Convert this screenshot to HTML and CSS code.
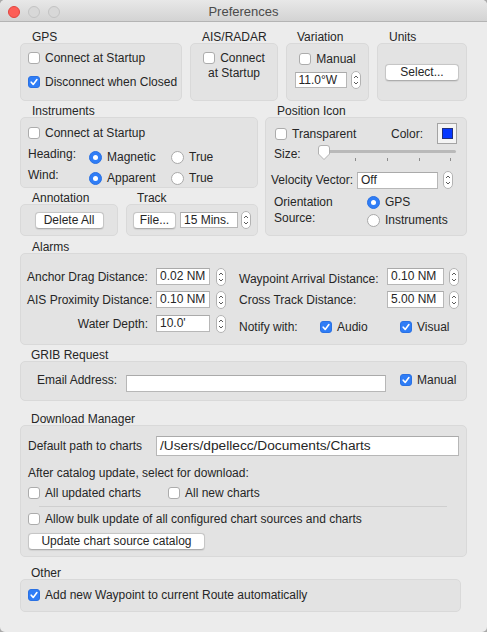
FILE: index.html
```html
<!DOCTYPE html>
<html>
<head>
<meta charset="utf-8">
<title>Preferences</title>
<link rel="stylesheet" href="styles.css">
</head>
<body>
<div class="window">
  <div class="titlebar">
    <div class="lights"><span class="light red"></span><span class="light"></span><span class="light"></span></div>
    <div class="title">Preferences</div>
    <div class="tspacer"></div>
  </div>
  <div class="content">
    <div class="row r1">
      <section class="group w-gps">
        <div class="glabel">GPS</div>
        <div class="box box-gps">
          <label class="check"><span class="cb"></span>Connect at Startup</label>
          <label class="check"><span class="cb on"><svg viewBox="0 0 10 10"><path d="M2.2 5.2 L4.2 7.4 L7.9 2.6"/></svg></span>Disconnect when Closed</label>
        </div>
      </section>
      <section class="group w-ais">
        <div class="glabel">AIS/RADAR</div>
        <div class="box box-ais">
          <span class="cb inline"></span>Connect<br>at Startup
        </div>
      </section>
      <section class="group w-var">
        <div class="glabel gl11">Variation</div>
        <div class="box box-var">
          <label class="check"><span class="cb"></span>Manual</label>
          <div class="spin">
            <div class="field f-var">11.0°W</div>
            <svg class="stepper" width="10" height="18" viewBox="0 0 10 18"><rect x="0.5" y="0.5" width="9" height="17" rx="4.5"/><path d="M3 7 L5 5 L7 7 M3 11 L5 13 L7 11"/></svg>
          </div>
        </div>
      </section>
      <section class="group w-units">
        <div class="glabel">Units</div>
        <div class="box box-units">
          <div class="btn b-select">Select...</div>
        </div>
      </section>
    </div>

    <div class="row r2">
      <div class="col-left">
        <section class="group">
          <div class="glabel">Instruments</div>
          <div class="box box-inst">
            <label class="check inst-row1"><span class="cb"></span>Connect at Startup</label>
            <div class="radio-row rr1">
              <div class="rlabel">Heading:</div>
              <label class="ropt"><span class="radio on"></span>Magnetic</label>
              <label class="ropt"><span class="radio"></span>True</label>
            </div>
            <div class="radio-row">
              <div class="rlabel">Wind:</div>
              <label class="ropt"><span class="radio on"></span>Apparent</label>
              <label class="ropt"><span class="radio"></span>True</label>
            </div>
          </div>
        </section>
        <div class="row r2b">
          <section class="group w-annot">
            <div class="glabel">Annotation</div>
            <div class="box box-annot">
              <div class="btn b-delete">Delete All</div>
            </div>
          </section>
          <section class="group w-track">
            <div class="glabel gl11">Track</div>
            <div class="box box-track">
              <div class="btn b-file">File...</div>
              <div class="field f-track">15 Mins.</div>
              <svg class="stepper st-track" width="10" height="18" viewBox="0 0 10 18"><rect x="0.5" y="0.5" width="9" height="17" rx="4.5"/><path d="M3 7 L5 5 L7 7 M3 11 L5 13 L7 11"/></svg>
            </div>
          </section>
        </div>
      </div>
      <div class="col-right">
        <section class="group">
          <div class="glabel">Position Icon</div>
          <div class="box box-pi">
            <div class="pi-row1">
              <label class="check"><span class="cb"></span>Transparent</label>
              <span class="colorlbl">Color:</span>
              <div class="swatch"><span></span></div>
            </div>
            <div class="pi-row2">
              <span class="sizelbl">Size:</span>
              <svg class="slider" width="140" height="17" viewBox="0 0 140 17">
                <rect class="track" x="2" y="5" width="137" height="3" rx="1.5"/>
                <path class="tick" d="M38.5 13 V16 M70.5 13 V16 M102.5 13 V16 M133.5 13 V16"/>
                <path class="knob" d="M1.5 3 Q1.5 0.5 4 0.5 L10 0.5 Q12.5 0.5 12.5 3 L12.5 9 L7 14.5 L1.5 9 Z"/>
              </svg>
            </div>
            <div class="pi-row3">
              <span class="vlbl">Velocity Vector:</span>
              <div class="field f-vel">Off</div>
              <svg class="stepper st-vel" width="10" height="18" viewBox="0 0 10 18"><rect x="0.5" y="0.5" width="9" height="17" rx="4.5"/><path d="M3 7 L5 5 L7 7 M3 11 L5 13 L7 11"/></svg>
            </div>
            <div class="pi-row4">
              <div class="olbl">Orientation<br>Source:</div>
              <div class="ocol">
                <label class="ropt"><span class="radio on"></span>GPS</label>
                <label class="ropt"><span class="radio"></span>Instruments</label>
              </div>
            </div>
          </div>
        </section>
      </div>
    </div>

    <section class="group g-alarms">
      <div class="glabel">Alarms</div>
      <div class="box box-alarms">
        <div class="alarm-left">
          <div class="arow">
            <span class="albl">Anchor Drag Distance:</span>
            <div class="field f-al">0.02 NM</div>
            <svg class="stepper st-al" width="10" height="18" viewBox="0 0 10 18"><rect x="0.5" y="0.5" width="9" height="17" rx="4.5"/><path d="M3 7 L5 5 L7 7 M3 11 L5 13 L7 11"/></svg>
          </div>
          <div class="arow ar2">
            <span class="albl">AIS Proximity Distance:</span>
            <div class="field f-al">0.10 NM</div>
            <svg class="stepper st-al" width="10" height="18" viewBox="0 0 10 18"><rect x="0.5" y="0.5" width="9" height="17" rx="4.5"/><path d="M3 7 L5 5 L7 7 M3 11 L5 13 L7 11"/></svg>
          </div>
          <div class="arow ar3">
            <span class="albl right">Water Depth:</span>
            <div class="field f-al">10.0'</div>
            <svg class="stepper st-al" width="10" height="18" viewBox="0 0 10 18"><rect x="0.5" y="0.5" width="9" height="17" rx="4.5"/><path d="M3 7 L5 5 L7 7 M3 11 L5 13 L7 11"/></svg>
          </div>
        </div>
        <div class="alarm-right">
          <div class="arow">
            <span class="arlbl lower">Waypoint Arrival Distance:</span>
            <div class="field f-ar">0.10 NM</div>
            <svg class="stepper st-ar" width="10" height="18" viewBox="0 0 10 18"><rect x="0.5" y="0.5" width="9" height="17" rx="4.5"/><path d="M3 7 L5 5 L7 7 M3 11 L5 13 L7 11"/></svg>
          </div>
          <div class="arow ar2">
            <span class="arlbl">Cross Track Distance:</span>
            <div class="field f-ar">5.00 NM</div>
            <svg class="stepper st-ar" width="10" height="18" viewBox="0 0 10 18"><rect x="0.5" y="0.5" width="9" height="17" rx="4.5"/><path d="M3 7 L5 5 L7 7 M3 11 L5 13 L7 11"/></svg>
          </div>
          <div class="notify">
            <span class="nlbl">Notify with:</span>
            <label class="check c-audio"><span class="cb on"><svg viewBox="0 0 10 10"><path d="M2.2 5.2 L4.2 7.4 L7.9 2.6"/></svg></span>Audio</label>
            <label class="check"><span class="cb on"><svg viewBox="0 0 10 10"><path d="M2.2 5.2 L4.2 7.4 L7.9 2.6"/></svg></span>Visual</label>
          </div>
        </div>
      </div>
    </section>

    <section class="group g-grib">
      <div class="glabel gl11">GRIB Request</div>
      <div class="box box-grib">
        <span class="elbl">Email Address:</span>
        <div class="field f-email"></div>
        <label class="check c-manual"><span class="cb on"><svg viewBox="0 0 10 10"><path d="M2.2 5.2 L4.2 7.4 L7.9 2.6"/></svg></span>Manual</label>
      </div>
    </section>

    <section class="group g-dl">
      <div class="glabel gl11">Download Manager</div>
      <div class="box box-dl">
        <div class="drow1">
          <span class="dlbl">Default path to charts</span>
          <div class="field f-path">/Users/dpellecc/Documents/Charts</div>
        </div>
        <div class="drow2">After catalog update, select for download:</div>
        <div class="drow3">
          <label class="check c-upd"><span class="cb"></span>All updated charts</label>
          <label class="check"><span class="cb"></span>All new charts</label>
        </div>
        <div class="sep"></div>
        <label class="check drow4"><span class="cb"></span>Allow bulk update of all configured chart sources and charts</label>
        <div class="btn b-update">Update chart source catalog</div>
      </div>
    </section>

    <section class="group g-other">
      <div class="glabel gl11">Other</div>
      <div class="box box-other">
        <label class="check"><span class="cb on"><svg viewBox="0 0 10 10"><path d="M2.2 5.2 L4.2 7.4 L7.9 2.6"/></svg></span>Add new Waypoint to current Route automatically</label>
      </div>
    </section>
  </div>
</div>
</body>
</html>
```
FILE: styles.css
```css
* { box-sizing: border-box; margin: 0; padding: 0; }
html, body { background: #a9a9a9; }
body {
  font-family: "Liberation Sans", Arial, sans-serif;
  font-size: 12px;
  color: #262626;
  width: 487px;
  height: 632px;
  overflow: hidden;
}
.window {
  width: 487px;
  height: 632px;
  background: #ececec;
  border-radius: 5px;
  overflow: hidden;
}

/* title bar */
.titlebar {
  height: 22px;
  display: flex;
  align-items: center;
  background: linear-gradient(#e8e8e8, #d3d3d3);
  border-bottom: 1px solid #b4b4b4;
}
.lights { width: 62px; display: flex; gap: 8px; padding: 2px 0 0 8px; }
.light {
  width: 12px; height: 12px; border-radius: 50%;
  background: #d8d8d8; border: 1px solid #c3c3c3; flex: none;
}
.light.red { background: #fd5e57; border-color: #e1453f; }
.title {
  flex: 1; text-align: center; font-size: 13px; color: #4b4b4b;
  line-height: 19px; padding-top: 2px;
}
.tspacer { width: 62px; }

/* layout */
.content { padding: 9px 20px 0 20px; }
.row { display: flex; }
.r1 { gap: 8px; }
.glabel { height: 12px; line-height: 12px; padding-left: 12px; white-space: nowrap; }
.glabel.gl11 { padding-left: 11px; }
.box { background: #e3e3e3; border: 1px solid #d9d9d9; border-radius: 5px; }

.w-gps { width: 162px; }
.w-ais { width: 88px; }
.w-var { width: 83px; }
.w-units { width: 90px; }
.r1 .box { height: 58px; }

/* controls */
.check { display: flex; align-items: center; gap: 5px; height: 16px; white-space: nowrap; }
.cb {
  width: 12px; height: 12px; border: 1px solid #acacac; border-radius: 3px;
  background: #fff; flex: none; display: flex; align-items: center; justify-content: center;
}
.cb.on { background: #2f7df6; border-color: #2a71e3; }
.cb svg { width: 10px; height: 10px; }
.cb svg path { fill: none; stroke: #fff; stroke-width: 1.6; stroke-linecap: round; stroke-linejoin: round; }
.cb.inline { display: inline-flex; vertical-align: -2px; margin-right: 5px; }

.radio {
  width: 13px; height: 13px; border-radius: 50%; border: 1px solid #a9a9a9;
  background: #fff; flex: none; display: flex; align-items: center; justify-content: center;
}
.radio.on { background: #2f7df6; border-color: #2a71e3; }
.radio.on::after { content: ""; width: 5px; height: 5px; border-radius: 50%; background: #fff; }

.field {
  background: #fff; border: 1px solid #b7b7b7; border-top-color: #aaaaaa;
  height: 17px; line-height: 15px; padding: 0 3px; white-space: nowrap; overflow: hidden; flex: none;
}
.stepper { flex: none; display: block; }
.stepper rect { fill: #fff; stroke: #b3b3b3; }
.stepper path { fill: none; stroke: #5b5b5b; stroke-width: 1; }

.btn {
  background: #fff; border: 1px solid #c6c6c6; border-bottom-color: #adadad; border-radius: 4px;
  height: 17px; line-height: 15px; text-align: center; white-space: nowrap;
  box-shadow: 0 0.5px 1px rgba(0, 0, 0, 0.08); flex: none;
}

/* row 1 */
.box-gps { display: flex; flex-direction: column; gap: 8px; padding: 6px 0 0 7px; }
.box-ais { padding-top: 7px; text-align: center; line-height: 15px; }
.box-var { display: flex; flex-direction: column; align-items: center; padding-top: 7px; gap: 4px; }
.spin { display: flex; align-items: center; gap: 4px; }
.f-var { width: 52px; height: 16px; line-height: 14px; }
.box-units { display: flex; align-items: center; justify-content: center; }
.b-select { width: 74px; }

/* row 2 */
.r2 { gap: 7px; margin-top: 4px; }
.col-left { width: 238px; }
.col-right { width: 202px; }
.box-inst { height: 71px; padding: 7px 0 0 7px; }
.inst-row1 { margin-bottom: 7px; }
.radio-row { display: flex; height: 18px; align-items: center; }
.rr1 { margin-bottom: 3px; }
.rlabel { width: 61px; align-self: flex-start; line-height: 12px; }
.ropt { display: flex; align-items: center; gap: 5px; width: 82px; white-space: nowrap; }

.r2b { gap: 8px; margin-top: 4px; }
.w-annot { width: 98px; }
.w-track { width: 132px; }
.box-annot { height: 32px; display: flex; align-items: center; justify-content: center; }
.b-delete { width: 69px; }
.box-track { height: 32px; display: flex; align-items: center; padding-left: 6px; }
.b-file { width: 43px; margin-right: 4px; }
.f-track { width: 58px; height: 16px; line-height: 14px; }
.st-track { margin-left: 3px; }

.box-pi { height: 119px; padding: 5px 9px 0 9px; }
.pi-row1 { display: flex; align-items: center; height: 21px; }
.pi-row1 .check { flex: 1; }
.colorlbl { margin-right: 14px; }
.swatch {
  width: 20px; height: 21px; border: 1px solid #a4a4a4; background: #f4f4f4;
  display: flex; align-items: center; justify-content: center;
}
.swatch span { width: 11px; height: 11px; background: #0537ff; border: 1px solid #23307a; }
.pi-row2 { display: flex; align-items: center; height: 17px; margin-top: 1px; }
.sizelbl { width: 43px; margin-left: -1px; }
.slider { display: block; flex: none; }
.slider .track { fill: #b9b9b9; }
.slider .tick { stroke: #8c8c8c; stroke-width: 1; fill: none; }
.slider .knob { fill: #fff; stroke: #a2a2a2; stroke-width: 0.8; }
.pi-row3 { display: flex; align-items: center; height: 18px; margin-top: 9px; }
.vlbl { width: 86px; margin-left: -4px; white-space: nowrap; }
.f-vel { width: 81px; }
.st-vel { margin-left: 5px; }
.pi-row4 { display: flex; margin-top: 5px; }
.olbl { width: 93px; line-height: 16px; margin-left: -1px; }
.ocol { display: flex; flex-direction: column; gap: 2px; }
.ocol .ropt { height: 16px; }

/* alarms */
.g-alarms { margin-top: 5px; }
.box-alarms { height: 92px; padding: 14px 0 0 6px; display: flex; }
.alarm-left { width: 199px; display: flex; flex-direction: column; }
.arow { display: flex; align-items: center; height: 17px; }
.ar2 { margin-top: 6px; }
.ar3 { margin-top: 7px; }
.albl { width: 129px; white-space: nowrap; }
.albl.right { text-align: right; padding-right: 8px; }
.f-al { width: 54px; }
.st-al { margin-left: 6px; }
.alarm-right { margin-left: 13px; display: flex; flex-direction: column; }
.arlbl { width: 148px; white-space: nowrap; }
.arlbl.lower { padding-top: 5px; }
.f-ar { width: 57px; }
.st-ar { margin-left: 5px; }
.notify { display: flex; align-items: center; height: 17px; margin-top: 10px; }
.nlbl { width: 81px; }
.c-audio { width: 80px; }

/* grib */
.g-grib { margin-top: 4px; }
.box-grib { height: 40px; display: flex; align-items: center; padding: 4px 0 0 16px; }
.elbl { width: 89px; margin-bottom: 6px; }
.f-email { width: 260px; }
.c-manual { margin-left: 14px; margin-bottom: 6px; }

/* download */
.g-dl { margin-top: 12px; }
.box-dl { height: 132px; padding: 10px 7px 0 7px; }
.drow1 { display: flex; align-items: center; height: 20px; }
.dlbl { width: 128px; white-space: nowrap; }
.f-path { flex: 1; height: 20px; line-height: 18px; font-size: 13.7px; padding-left: 3px; }
.drow2 { margin-top: 9px; height: 16px; line-height: 16px; }
.drow3 { display: flex; margin-top: 4px; }
.c-upd { width: 140px; }
.sep { height: 1px; background: #cfcfcf; margin: 5px 12px 0 11px; }
.drow4 { margin-top: 4px; }
.b-update { width: 177px; margin-top: 6px; }

/* other */
.g-other { margin-top: 10px; }
.box-other { width: 441px; height: 33px; padding: 7px 0 0 7px; }
```
